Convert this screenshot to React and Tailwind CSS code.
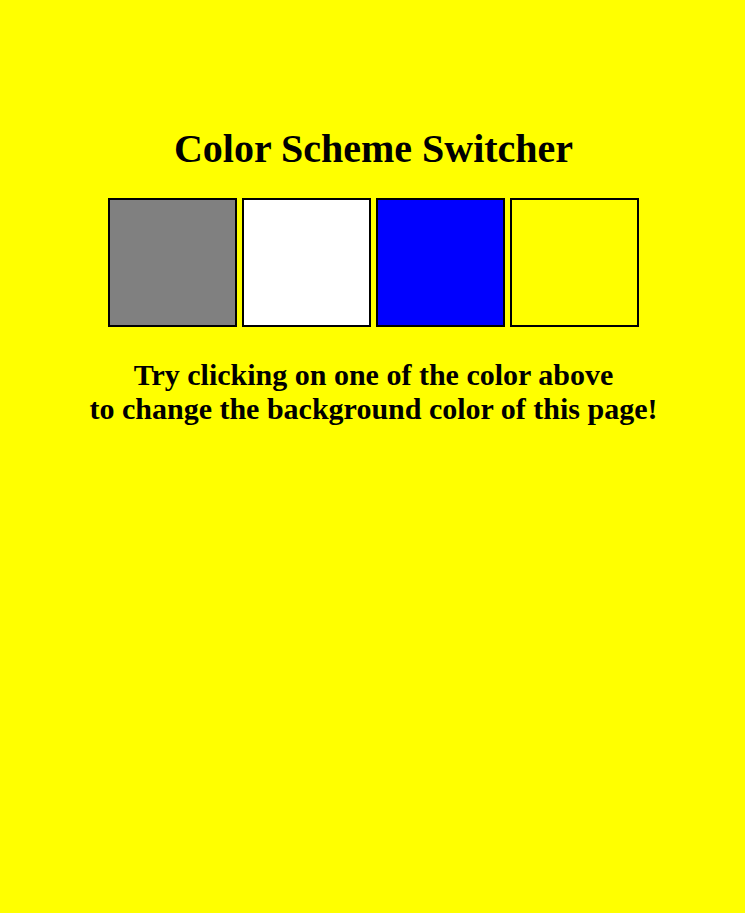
export default function App() {
  const colors = ["bg-[#808080]", "bg-white", "bg-[#0000ff]", "bg-[#ffff00]"];
  return (
    <div className="min-h-[913px] bg-[#ffff00] text-black font-['Liberation_Serif',serif] flex flex-col items-center pt-[125px] pl-[2px]">
      <h1 className="text-[40px] font-bold leading-[48px]">Color Scheme Switcher</h1>
      <div className="flex gap-[5px] mt-[25px]">
        <div className={`w-[129px] h-[129px] border-2 border-black ${colors[0]}`} />
        <div className={`w-[129px] h-[129px] border-2 border-black ${colors[1]}`} />
        <div className={`w-[129px] h-[129px] border-2 border-black ${colors[2]}`} />
        <div className={`w-[129px] h-[129px] border-2 border-black ${colors[3]}`} />
      </div>
      <p className="text-[30px] font-bold leading-[34px] text-center mt-[31px]">
        Try clicking on one of the color above
        <br />
        to change the background color of this page!
      </p>
    </div>
  );
}
